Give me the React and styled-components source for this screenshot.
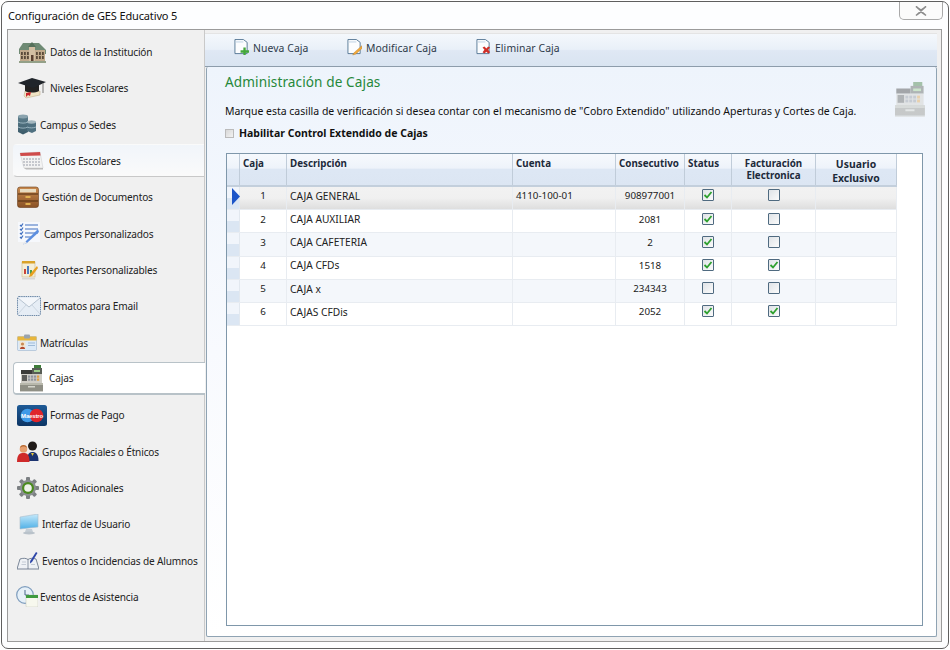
import React from "react";
import styled, { createGlobalStyle } from "styled-components";

const Global = createGlobalStyle`
  html, body { margin: 0; padding: 0; background: #fff; }
  body { font-family: "Noto Sans", "Open Sans", sans-serif; color: #1c1c1c; }
`;
const Window = styled.div`
  box-sizing: border-box; width: 948px; height: 648px; margin: 1px 0 0 1px;
  border: 1px solid #5f5f5f; border-radius: 7px; background: #fdfeff;
  padding: 0 6px 6px 5px; display: flex; flex-direction: column;
`;
const TitleBar = styled.div`
  height: 27px; flex: none; display: flex; justify-content: space-between; align-items: flex-start;
`;
const Title = styled.div`
  font-size: 11px; line-height: 27px; padding-left: 1px; color: #111; letter-spacing: -.14px;
`;
const CloseButton = styled.div`
  width: 44px; height: 18px; margin-right: -1px; box-sizing: border-box; border: 1px solid #a9a9a9; border-top: 0;
  border-radius: 0 0 5px 5px; background: #fbfbfb; display: flex; align-items: center; justify-content: center;
`;
const Frame = styled.div`
  flex: 1; min-height: 0; display: flex; box-sizing: border-box; border: 1px solid #9b9b9b; background: #f0f0f0;
`;
const Sidebar = styled.nav`
  width: 197px; flex: none; box-sizing: border-box; padding: 5.5px 0 0 5px; display: flex; flex-direction: column;
  border-right: 1px solid #c9c9c9;
`;
const NavItem = styled.div`
  height: 33px; flex: none; margin-bottom: 3.33px; display: flex; align-items: center; box-sizing: border-box;
  font-size: 10.1px; letter-spacing: -.16px; color: #222; white-space: nowrap;
  border-radius: ${p => (p.$active || p.$soft ? "4px 0 0 4px" : "0")};
  background: ${p => (p.$active ? "#fff" : p.$soft ? "linear-gradient(#f1f5fa,#fafafa)" : "transparent")};
  border: ${p => (p.$active ? "1px solid #b8c2c8" : "1px solid transparent")};
  border-bottom: ${p => (p.$active ? "2px solid #b8c2c8" : p.$soft ? "1px solid #c8c8c8" : "1px solid transparent")};
  border-right: 0;
  margin-right: ${p => (p.$active ? "-1px" : "0")};
`;
const NavIconSlot = styled.span`
  flex: none; box-sizing: border-box; display: flex; align-items: center;
  width: ${p => p.$text}px; padding-left: ${p => p.$icon}px;
`;
const Main = styled.div`
  flex: 1; min-width: 0; display: flex; flex-direction: column; padding: 3px 4px 4px 0;
`;
const Toolbar = styled.div`
  height: 34px; flex: none; box-sizing: border-box; display: flex; align-items: center; padding-left: 29px;
  background: linear-gradient(#f4f8fc 0%, #e9f0f8 48%, #dfe8f4 52%, #d9e4f1 100%);
  border-bottom: 1px solid #8d9cab; border-top: 1px solid #e4e4e4;
`;
const ToolButton = styled.div`
  display: flex; align-items: center; gap: 4px; font-size: 10.4px; color: #2d3a4a; width: ${p => p.$w}px; flex: none; letter-spacing: .08px;
  padding-bottom: 5px;
`;
const Panel = styled.div`
  flex: 1; min-height: 0; margin-left: 1px; box-sizing: border-box; border: 1px solid #8fa3b3; border-top: 0;
  border-radius: 2px; background: linear-gradient(#eef4fc 0, #f8fafe 50%, #fff 100%);
  padding: 0 13px 10px 18px; display: flex; flex-direction: column; position: relative;
`;
const Heading = styled.h1`
  margin: 5px 0 0; font-size: 13.6px; line-height: 20px; font-weight: 400; color: #26883a; letter-spacing: .1px;
`;
const Lead = styled.p`
  margin: 11px 0 0; font-size: 10.48px; line-height: 16px; color: #111; white-space: nowrap;
`;
const EnableRow = styled.label`
  margin-top: 6px; display: flex; align-items: center; gap: 5px; font-size: 10.5px; font-weight: 700; color: #111; line-height: 16px;
`;
const SmallBox = styled.span`
  width: 9px; height: 9px; flex: none; box-sizing: border-box; border: 1px solid #bbb; background: linear-gradient(135deg,#d8d8d8,#f2f2f2);
`;
const CornerIcon = styled.div`
  position: absolute; right: 11px; top: 15px; opacity: .42;
`;
const Grid = styled.div`
  flex: 1; min-height: 0; margin: 12px 0 0 1px; box-sizing: border-box; border: 1px solid #7f97aa; background: #fff;
`;
const columns = "13px 47px 226px 103px 69px 47px 84px 81px";
const HeadRow = styled.div`
  display: grid; grid-template-columns: ${columns}; width: 670px;
  background: linear-gradient(#f6f9fd 0, #eef3fa 45%, #dde7f4 50%, #dce6f3 100%);
  border-bottom: 2px solid #c3cfdc; height: 31px;
`;
const HeadCell = styled.div`
  box-sizing: border-box; border-right: 1px solid #c0ccd9; font-size: ${p => (p.$tall ? "10.4px" : "9.8px")}; font-weight: 700; color: #1d2a3a;
  line-height: ${p => (p.$tall ? "14px" : "11.5px")}; padding: ${p => (p.$tall ? "3px 3px 0" : "4px 3px 0")};
  text-align: ${p => p.$center ? "center" : "left"}; white-space: nowrap;
`;
const BodyRow = styled.div`
  display: grid; grid-template-columns: ${columns}; height: 23.2px; width: 670px; box-sizing: border-box;
  border-bottom: 1px solid #e8ecf1;
  background: ${p => (p.$selected ? "linear-gradient(#f2f2f2,#f0f0f0 50%,#dedede)" : p.$alt ? "#f4f7fb" : "#fff")};
`;
const RowHead = styled.div`
  display: flex; align-items: flex-start; justify-content: flex-end; background: linear-gradient(#f1f5fb 50%,#dbe6f3 50%);
  border-right: 1px solid #e2e8ef;
`;
const Arrow = styled.svg`
  flex: none; margin: 1px -1px 0 0;
`;
const Cell = styled.div`
  box-sizing: border-box; font-size: ${p => (p.$text ? "10.2px" : "9.8px")}; color: #222; display: flex; align-items: center; padding: 0 3px 4.5px;
  border-right: 1px solid #e8ecf1; white-space: nowrap; overflow: hidden;
  justify-content: ${p => p.$center ? "center" : "flex-start"};
`;
const Check = styled.span`
  width: 12px; height: 12px; box-sizing: border-box; border: 1px solid #4f6a80; border-radius: 1px; margin-top: -1px;
  background: linear-gradient(135deg,#dfe3e7,#fbfbfb); display: flex; align-items: center; justify-content: center;
`;

const g = (id, a, b) => <linearGradient id={id} x1="0" y1="0" x2="0" y2="1"><stop offset="0" stopColor={a} /><stop offset="1" stopColor={b} /></linearGradient>;

const Building = () => (
  <svg width="29" height="22" viewBox="0 0 29 22">
    <path d="M1 8 5 2h16l7 7v4H1z" fill="#6f8a74" />
    <path d="M2 9h25v11H2z" fill="#c0a98b" />
    <path d="M11 5h6v15h-6z" fill="#d2bea2" />
    <path d="M10 6 14 1l4 5z" fill="#55705a" />
    {[3, 6, 9, 18, 21, 24].flatMap(x => [11, 15].map(y => <rect key={x + "-" + y} x={x} y={y} width="1.8" height="3" fill="#5a4a3a" />))}
    <rect x="13" y="14" width="2.5" height="6" fill="#5a4030" />
    <path d="M1 20h27v2H1z" fill="#93a088" />
  </svg>
);
const Cap = () => (
  <svg width="28" height="22" viewBox="0 0 28 22">
    <path d="M7 14h15v4l-14 3-2-2z" fill="#efe3c4" stroke="#b9a680" strokeWidth=".5" />
    <path d="M7 8h14v6c-4 2-10 2-14 0z" fill="#222" />
    <path d="M0 6 14 1l14 4-13 6z" fill="#20252b" />
    <path d="M25 6v10" stroke="#777" strokeWidth="1" />
    <path d="M8 16l5-1-1 4-2-1-2 2z" fill="#c9242b" />
  </svg>
);
const Servers = () => (
  <svg width="20" height="21" viewBox="0 0 20 21">
    <path d="M1 2h10v16l-5 2.500L1 18z" fill="url(#sv)" />
    <ellipse cx="6" cy="2.500" rx="5" ry="1.900" fill="#8aa3ae" />
    <path d="M1 8c3 1.500 7 1.500 10 0M1 13c3 1.500 7 1.500 10 0" stroke="#a9c3ce" strokeWidth=".8" fill="none" />
    <path d="M10 8h9v9l-4 2-5-2z" fill="#4f7080" />
    <ellipse cx="14.500" cy="8" rx="4.500" ry="1.700" fill="#a5b8c0" />
    <path d="M10 13c3 1.200 6 1.200 9 0" stroke="#a9c3ce" strokeWidth=".8" fill="none" />
    <defs>{g("sv", "#5e7f8d", "#3a5968")}</defs>
  </svg>
);
const Calendar = () => (
  <svg width="25" height="20" viewBox="0 0 25 20">
    <path d="M1 2 21 1l3 16H5z" fill="#f3f3f3" stroke="#c8c8c8" strokeWidth=".5" />
    <path d="M1 2 21 1l.6 3.5L1.6 5z" fill="#cf4b4b" />
    {[7, 10, 13].flatMap(y => [4, 7, 10, 13, 16, 19].map(x => <rect key={x + "-" + y} x={x} y={y} width="2" height="2" fill="#c6c8ce" />))}
    <path d="M5 17h19v1.6H7z" fill="#bcbcbc" />
  </svg>
);
const Drawer = () => (
  <svg width="22" height="22" viewBox="0 0 22 22">
    <rect x="0.5" y="1" width="21" height="20.5" rx="2.5" fill="url(#dr)" stroke="#6a3d1a" strokeWidth=".6" />
    <path d="M1 8h20M1 15h20" stroke="#4f2c10" strokeWidth="1" />
    <rect x="3" y="3" width="16" height="3.4" fill="#e8dcc0" />
    <rect x="8.5" y="10" width="5" height="2" fill="#e0b050" /><rect x="8.5" y="17" width="5" height="2" fill="#e0b050" />
    <defs>{g("dr", "#c98a4e", "#8a5226")}</defs>
  </svg>
);
const Checklist = () => (
  <svg width="22" height="24" viewBox="0 0 22 24">
    <rect width="22" height="20" fill="#f6f8fc" />
    {[3, 7, 11].map(y => <path key={y} d={`M2 ${y}l1.2 1.2L5 ${y - 1.5}M7 ${y}h13`} stroke="#3f6fc0" strokeWidth="1.2" fill="none" />)}
    <path d="M2 15l1.2 1.2L5 13.500M7 15h7" stroke="#3f6fc0" strokeWidth="1.2" fill="none" />
    <path d="M20 7 8 19l-3 3.500 4-1.500L21 10z" fill="#5d8fe0" />
    <path d="M5 22.500l4-1.500-2-2z" fill="#eee" />
  </svg>
);
const Report = () => (
  <svg width="17" height="20" viewBox="0 0 17 20">
    <rect x="1" y="2" width="13" height="15" fill="#f4eed8" stroke="#c9b98d" strokeWidth=".6" />
    <rect x="1" y="1" width="13" height="2.500" fill="#d9a22a" />
    <rect x="3" y="9" width="2" height="5" fill="#c9453a" /><rect x="6" y="6" width="2" height="8" fill="#4a7cc0" /><rect x="9" y="10" width="2" height="4" fill="#4aa04a" />
    <path d="M16 6 9 14l-1 3 3-1 6-8z" fill="#e8a020" />
    <rect x="1" y="18" width="13" height="1.500" fill="#d7d7d7" />
  </svg>
);
const Envelope = () => (
  <svg width="24" height="20" viewBox="0 0 24 20">
    <rect x=".5" y=".5" width="23" height="19" rx="1.500" fill="#e6edf5" stroke="#6f8aa8" strokeDasharray="1.500 .7" />
    <path d="M1 2 12 11 23 2" fill="#f3f6fa" stroke="#a9b7c6" strokeWidth=".8" />
    <path d="M1 18 9 9M23 18l-8-9" stroke="#c0ccd8" strokeWidth=".7" />
  </svg>
);
const IdCard = () => (
  <svg width="20" height="17" viewBox="0 0 20 17">
    <rect x=".5" y="2.500" width="19" height="14" rx="1" fill="#dceaf8" stroke="#9cb4cc" strokeWidth=".6" />
    <rect x=".5" y="2.500" width="19" height="4" fill="#e8b63c" />
    <rect x="7" y=".5" width="6" height="4" rx="1" fill="#9aa3ad" />
    <rect x="2.500" y="7.500" width="6" height="7.500" fill="#f2e6d2" />
    <circle cx="5.500" cy="10" r="1.600" fill="#c98a55" /><path d="M3 15c0-3 5-3 5 0z" fill="#b3492f" />
    <path d="M11 9h7M11 11.500h7" stroke="#9fbbd8" />
  </svg>
);
const Register = ({ scale = 1 }) => (
  <svg width={23 * scale} height={27 * scale} viewBox="0 0 23 27">
    <rect x="14" y="0" width="7" height="5" fill="#3f7d3a" />
    <rect x="1" y="5" width="11" height="4" fill="#3b3b38" />
    <rect x="12" y="3" width="10" height="6" fill="#585d55" /><rect x="14" y="5" width="6" height="2" fill="#9cd08a" />
    <rect x="1" y="9" width="21" height="9" fill="#cfcdc6" />
    <rect x="2" y="10" width="5" height="6" fill="#5b5b58" />
    {[8, 11, 14, 17].flatMap(x => [10.500, 13.500].map(y => <rect key={x + "-" + y} x={x} y={y} width="2.200" height="2.200" fill={x === 17 ? "#e0a040" : "#90949c"} />))}
    <rect x="0" y="18" width="23" height="8" fill="#8f8f85" />
    <rect x="0" y="18" width="23" height="2" fill="#b8b8ac" />
    <rect x="8" y="21" width="7" height="1.500" fill="#d5d5cc" />
    <rect x="0" y="26" width="23" height="1" fill="#d0d0cc" />
  </svg>
);
const Maestro = () => (
  <svg width="30" height="21" viewBox="0 0 30 21">
    <rect width="30" height="21" rx="2.500" fill="url(#ma)" />
    <circle cx="10.500" cy="10.500" r="6.800" fill="#3f9ae8" /><circle cx="19.500" cy="10.500" r="6.800" fill="#e0242a" />
    <text x="15" y="12.500" textAnchor="middle" fontSize="6" fontWeight="700" fill="#fff" fontFamily="Liberation Sans, sans-serif">Maestro</text>
    <defs>{g("ma", "#1e5a96", "#0d3564")}</defs>
  </svg>
);
const People = () => (
  <svg width="22" height="21" viewBox="0 0 22 21">
    <circle cx="15.500" cy="5" r="4.500" fill="#1f1a18" />
    <path d="M10 20c0-8 3-9 5.500-9s6 1 6 9z" fill="#1c3470" />
    <path d="M14 12l1.500 3 1.500-3z" fill="#e6c53a" />
    <circle cx="6.500" cy="8" r="3.800" fill="#e6a070" /><path d="M3 7c0-4 7-4 7 0-2-2-5-2-7 0z" fill="#b56a34" />
    <path d="M0 21c0-8 3-9 6.500-9s6 1 6 9z" fill="#cf2a2a" />
  </svg>
);
const Gear = () => (
  <svg width="22" height="22" viewBox="0 0 22 22">
    <g fill="#7c8083">{[0, 45, 90, 135].map(a => <rect key={a} x="9" y="0" width="4" height="22" rx="1" transform={`rotate(${a} 11 11)`} />)}</g>
    <circle cx="11" cy="11" r="8" fill="#8b8f92" />
    <circle cx="11" cy="11" r="6" fill="#4a8a1e" />
    <circle cx="11" cy="11" r="3.800" fill="#eef2ea" />
  </svg>
);
const Monitor = () => (
  <svg width="20" height="21" viewBox="0 0 20 21">
    <path d="M1 3 19 0v13L1 15z" fill="url(#mo)" stroke="#a8bccb" strokeWidth=".6" />
    <path d="M7 15h6l1 3H6z" fill="#c5ced6" />
    <ellipse cx="10" cy="19" rx="6" ry="1.500" fill="#b9c2ca" />
    <defs>{g("mo", "#c7eafb", "#4fb0e6")}</defs>
  </svg>
);
const Book = () => (
  <svg width="22" height="18" viewBox="0 0 22 18">
    <path d="M3 7c3-1 6-1 8 .5 2-1.500 5-1.500 8-.5l3 10H0z" fill="#eef1f5" stroke="#5c6b80" strokeWidth=".8" />
    <path d="M11 7.500V17" stroke="#5c6b80" strokeWidth=".7" />
    <path d="M5 10h4M4.500 12.500h4.500M14 12.500h4" stroke="#a8b2c0" strokeWidth=".6" />
    <path d="M19 0l1.500 1-5.500 9-2 1.500.2-2.500z" fill="#2d45a8" />
  </svg>
);
const ClockCal = () => (
  <svg width="22" height="21" viewBox="0 0 22 21">
    <circle cx="9" cy="9" r="8.300" fill="#e6f0f8" stroke="#7d9cbd" strokeWidth="1.200" />
    <path d="M9 4v5h4" stroke="#4a6a8a" strokeWidth="1" fill="none" />
    <rect x="10" y="9" width="12" height="12" rx="1" fill="#f7f8ee" stroke="#c3c7b8" strokeWidth=".5" />
    <rect x="10" y="9" width="12" height="3" fill="#3f9a3f" />
  </svg>
);
const FileBase = ({ children }) => (
  <svg width="15" height="17" viewBox="0 0 16 18">
    <path d="M1 .5h9l4 3v12H1z" fill="#fcfdfe" stroke="#45698a" strokeWidth=".9" />
    <path d="M2 2h8v2H2z" fill="#dbe6f0" />
    {children}
  </svg>
);
const NewIcon = () => <FileBase><path d="M10 9h2.500v3H16v2.500h-3.500V17H10v-2.500H7V12h3z" fill="#44a83a" /></FileBase>;
const EditIcon = () => <FileBase><path d="M16 7 8 14l-2 3 3.500-1 6.500-6z" fill="#f0a73a" stroke="#b07a20" strokeWidth=".4" /></FileBase>;
const DelIcon = () => <FileBase><path d="M7 9l2-1 2 2 2-2 2 1-2 2.500 2 2.500-2 1.500-2-2-2 2-2-1.500 2-2.500z" fill="#cf2f28" /></FileBase>;

const navItems = [
  ["Datos de la Institución", <Building />, 4, 36],
  ["Niveles Escolares", <Cap />, 4, 36],
  ["Campus o Sedes", <Servers />, 3, 26],
  ["Ciclos Escolares", <Calendar />, 5, 35, "soft"],
  ["Gestión de Documentos", <Drawer />, 3, 28],
  ["Campos Personalizados", <Checklist />, 4, 30],
  ["Reportes Personalizables", <Report />, 7, 28],
  ["Formatos para Email", <Envelope />, 3, 29],
  ["Matrículas", <IdCard />, 3, 26],
  ["Cajas", <Register />, 6, 35, "active"],
  ["Formas de Pago", <Maestro />, 3, 36],
  ["Grupos Raciales o Étnicos", <People />, 3, 28],
  ["Datos Adicionales", <Gear />, 3, 28],
  ["Interfaz de Usuario", <Monitor />, 5, 28],
  ["Eventos o Incidencias de Alumnos", <Book />, 3, 28],
  ["Eventos de Asistencia", <ClockCal />, 2, 26],
];

const rows = [
  [1, "CAJA GENERAL", "4110-100-01", "908977001", true, false],
  [2, "CAJA AUXILIAR", "", "2081", true, false],
  [3, "CAJA CAFETERIA", "", "2", true, false],
  [4, "CAJA CFDs", "", "1518", true, true],
  [5, "CAJA x", "", "234343", false, false],
  [6, "CAJAS CFDis", "", "2052", true, true],
];

const CheckBox = ({ on }) => (
  <Check>{on && <svg width="10" height="10" viewBox="0 0 10 10"><path d="M1.500 5 4 7.500 8.500 2" stroke="#2ea02e" strokeWidth="1.800" fill="none" /></svg>}</Check>
);

export default function App() {
  return (
    <>
      <Global />
      <Window>
        <TitleBar>
          <Title>Configuración de GES Educativo 5</Title>
          <CloseButton>
            <svg width="14" height="12" viewBox="0 0 14 12"><path d="M2 1.500 7 5l5-3.500M2 10.500 7 7l5 3.500M2 1.500l10 9M12 1.500l-10 9" stroke="#8c8c8c" strokeWidth="1.500" fill="none" /></svg>
          </CloseButton>
        </TitleBar>
        <Frame>
          <Sidebar>
            {navItems.map(([label, icon, iconLeft, textLeft, state]) => (
              <NavItem key={label} $active={state === "active"} $soft={state === "soft"}>
                <NavIconSlot $icon={iconLeft} $text={textLeft}>{icon}</NavIconSlot>
                <span>{label}</span>
              </NavItem>
            ))}
          </Sidebar>
          <Main>
            <Toolbar>
              <ToolButton $w={113}><NewIcon />Nueva Caja</ToolButton>
              <ToolButton $w={129}><EditIcon />Modificar Caja</ToolButton>
              <ToolButton $w={90}><DelIcon />Eliminar Caja</ToolButton>
            </Toolbar>
            <Panel>
              <Heading>Administración de Cajas</Heading>
              <Lead>Marque esta casilla de verificación si desea contar con el mecanismo de "Cobro Extendido" utilizando Aperturas y Cortes de Caja.</Lead>
              <EnableRow><SmallBox />Habilitar Control Extendido de Cajas</EnableRow>
              <CornerIcon><Register scale={1.3} /></CornerIcon>
              <Grid>
                <HeadRow>
                  <HeadCell />
                  <HeadCell>Caja</HeadCell>
                  <HeadCell>Descripción</HeadCell>
                  <HeadCell>Cuenta</HeadCell>
                  <HeadCell>Consecutivo</HeadCell>
                  <HeadCell>Status</HeadCell>
                  <HeadCell $center>Facturación<br />Electronica</HeadCell>
                  <HeadCell $center $tall>Usuario<br />Exclusivo</HeadCell>
                </HeadRow>
                {rows.map((r, i) => (
                  <BodyRow key={r[0]} $selected={i === 0} $alt={i % 2 === 0}>
                    <RowHead>
                      {i === 0 && <Arrow width="8" height="17" viewBox="0 0 8 17"><path d="M0 0l8 8.500L0 17z" fill="#1c55c8" /></Arrow>}
                    </RowHead>
                    <Cell $center>{r[0]}</Cell>
                    <Cell $text>{r[1]}</Cell>
                    <Cell>{r[2]}</Cell>
                    <Cell $center>{r[3]}</Cell>
                    <Cell $center><CheckBox on={r[4]} /></Cell>
                    <Cell $center><CheckBox on={r[5]} /></Cell>
                    <Cell />
                  </BodyRow>
                ))}
              </Grid>
            </Panel>
          </Main>
        </Frame>
      </Window>
    </>
  );
}
